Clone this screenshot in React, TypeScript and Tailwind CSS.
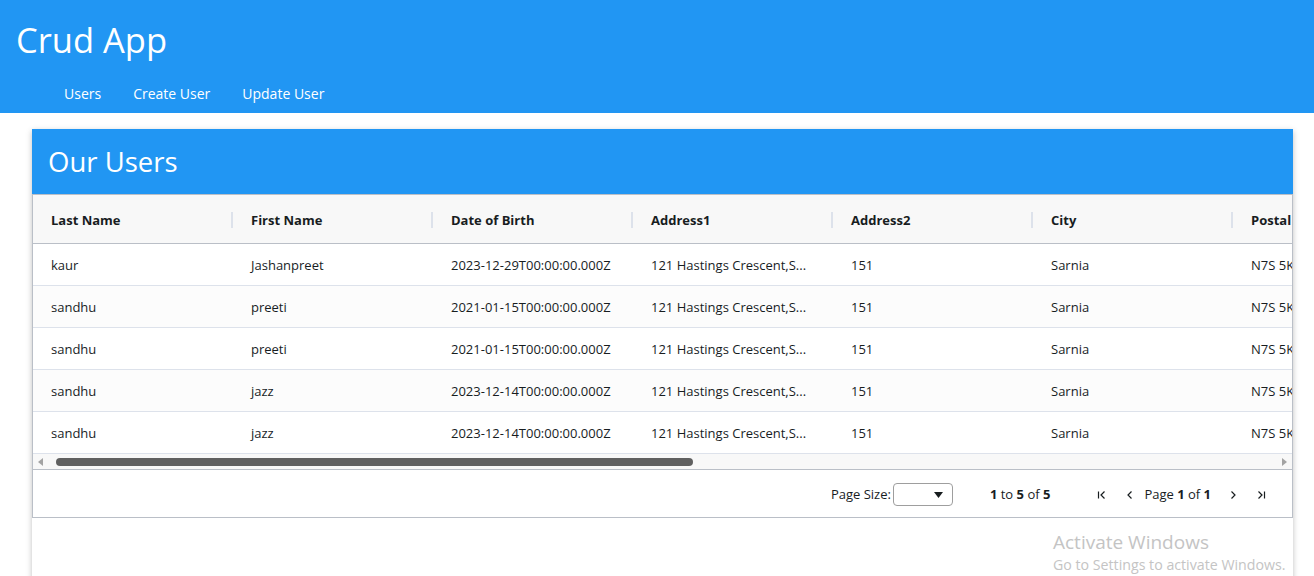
import type React from 'react';

const FONT = '"Open Sans", "Noto Sans", "Liberation Sans", sans-serif';

const COLUMNS: readonly string[] = [
  'Last Name',
  'First Name',
  'Date of Birth',
  'Address1',
  'Address2',
  'City',
  'Postal Code',
];

const USERS: ReadonlyArray<{ readonly id: string; readonly cells: readonly string[] }> = [
  { id: 'u1', cells: ['kaur', 'Jashanpreet', '2023-12-29T00:00:00.000Z', '121 Hastings Crescent,S...', '151', 'Sarnia', 'N7S 5K6'] },
  { id: 'u2', cells: ['sandhu', 'preeti', '2021-01-15T00:00:00.000Z', '121 Hastings Crescent,S...', '151', 'Sarnia', 'N7S 5K6'] },
  { id: 'u3', cells: ['sandhu', 'preeti', '2021-01-15T00:00:00.000Z', '121 Hastings Crescent,S...', '151', 'Sarnia', 'N7S 5K6'] },
  { id: 'u4', cells: ['sandhu', 'jazz', '2023-12-14T00:00:00.000Z', '121 Hastings Crescent,S...', '151', 'Sarnia', 'N7S 5K6'] },
  { id: 'u5', cells: ['sandhu', 'jazz', '2023-12-14T00:00:00.000Z', '121 Hastings Crescent,S...', '151', 'Sarnia', 'N7S 5K6'] },
];

function PageIcon({ kind }: { readonly kind: 'first' | 'prev' | 'next' | 'last' }): React.JSX.Element {
  return (
    <svg width="12" height="12" viewBox="0 0 12 12" fill="none" stroke="#181d1f" strokeWidth="1.2">
      {kind === 'first' && (
        <>
          <path d="M2.5 2.5v7" />
          <path d="M8.5 2.5 5 6l3.5 3.5" />
        </>
      )}
      {kind === 'prev' && <path d="M7.5 2.5 4 6l3.5 3.5" />}
      {kind === 'next' && <path d="M4.5 2.5 8 6l-3.5 3.5" />}
      {kind === 'last' && (
        <>
          <path d="M3.5 2.5 7 6l-3.5 3.5" />
          <path d="M9.5 2.5v7" />
        </>
      )}
    </svg>
  );
}

function UsersGrid(): React.JSX.Element {
  return (
    <div className="border border-[#babfc7] text-[13px] text-[#181d1f]">
      <div className="overflow-hidden">
        <div className="flex h-[49px] w-max border-b border-[#babfc7] bg-[#f8f8f8]">
          {COLUMNS.map((col, idx) => (
            <div key={col} className="relative flex w-[200px] shrink-0 items-center pl-[18px] pt-[3px] font-bold">
              {col}
              {idx < COLUMNS.length - 1 && (
                <span className="absolute right-0 top-[17px] h-[16px] w-[2px] bg-[#dde2eb]" />
              )}
            </div>
          ))}
        </div>
        {USERS.map((user, rowIdx) => (
          <div
            key={user.id}
            className={`flex h-[42px] w-max border-b border-[#dde2eb] ${rowIdx % 2 === 1 ? 'bg-[#fcfcfc]' : 'bg-white'}`}
          >
            {user.cells.map((cell, cellIdx) => (
              <div key={COLUMNS[cellIdx]} className="flex w-[200px] shrink-0 items-center pl-[18px] pt-[3px]">
                {cell}
              </div>
            ))}
          </div>
        ))}
      </div>
      <div className="flex h-[16px] items-center border-b border-[#babfc7] bg-[#f8f8f8] px-[5px]">
        <svg width="6" height="8" viewBox="0 0 6 8" className="shrink-0">
          <path d="M5 0v8L0 4z" fill="#a3a3a3" />
        </svg>
        <div className="ml-[12px] flex-1">
          <div className="h-[8px] w-[637px] rounded-full bg-[#606060]" />
        </div>
        <svg width="6" height="8" viewBox="0 0 6 8" className="shrink-0">
          <path d="M1 0v8l5-4z" fill="#a3a3a3" />
        </svg>
      </div>
      <div className="flex h-[47px] items-center justify-end pr-[25px] pt-[2px]">
        <span>Page Size:</span>
        <div className="ml-[2px] flex h-[23px] w-[60px] items-center justify-end rounded-[4px] border border-[#9e9e9e] pr-[9px]">
          <svg width="9" height="6" viewBox="0 0 9 6">
            <path d="M0 0h9L4.5 6z" fill="#181d1f" />
          </svg>
        </div>
        <span className="ml-[37px]">
          <b>1</b> to <b>5</b> of <b>5</b>
        </span>
        <div className="ml-[46px] flex items-center">
          <PageIcon kind="first" />
          <span className="ml-[16px]"><PageIcon kind="prev" /></span>
          <span className="ml-[8px]">
            Page <b>1</b> of <b>1</b>
          </span>
          <span className="ml-[16px]"><PageIcon kind="next" /></span>
          <span className="ml-[16px]"><PageIcon kind="last" /></span>
        </div>
      </div>
    </div>
  );
}

export default function App(): React.JSX.Element {
  return (
    <div className="relative h-[576px] overflow-hidden bg-white" style={{ fontFamily: FONT }}>
      <header className="h-[113px] bg-[#2196f3] text-white">
        <h1 className="pl-[16px] pt-[16px] text-[34.5px] leading-[48px]">Crud App</h1>
        <nav className="mt-[19px] flex gap-[32px] pl-[64px] text-[14px]">
          <span>Users</span>
          <span>Create User</span>
          <span>Update User</span>
        </nav>
      </header>
      <main className="ml-[32px] mt-[16px] w-[1261px] bg-white pb-[80px] shadow-[0_2px_6px_rgba(0,0,0,0.25)]">
        <div className="flex h-[65px] items-center bg-[#2196f3] pl-[16px] text-[27.5px] text-white">Our Users</div>
        <UsersGrid />
      </main>
      <div className="pointer-events-none absolute left-[1053px] top-[529px] text-[#c4c4c4]">
        <div className="text-[19px] leading-[26px]">Activate Windows</div>
        <div className="text-[14.2px] leading-[20px]">Go to Settings to activate Windows.</div>
      </div>
    </div>
  );
}
